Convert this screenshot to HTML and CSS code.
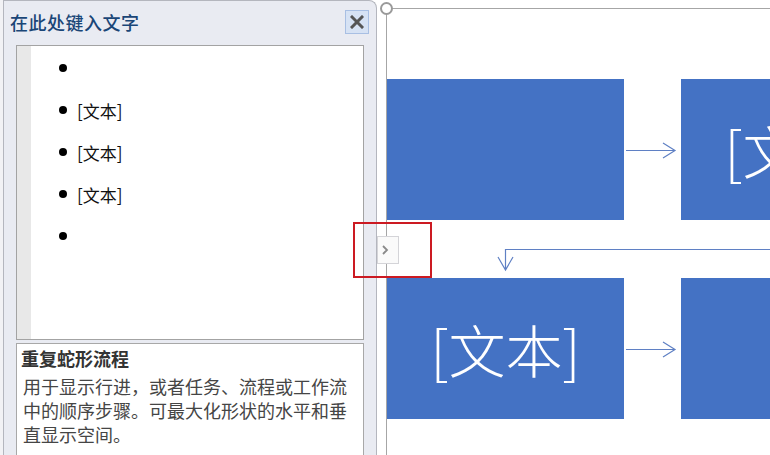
FILE: index.html
```html
<!DOCTYPE html>
<html lang="zh-CN">
<head>
<meta charset="utf-8">
<title>SmartArt 文本窗格</title>
<link rel="stylesheet" href="styles.css">
</head>
<body>
<div class="page">
  <aside class="pane">
    <header class="pane-head">
      <h1 class="pane-title">在此处键入文字</h1>
      <button class="close-btn" aria-label="关闭">
        <svg width="14" height="14" viewBox="0 0 14 14"><path d="M2 2 L12 12 M12 2 L2 12" stroke="#555" stroke-width="3" stroke-linecap="square"/></svg>
      </button>
    </header>
    <div class="text-box">
      <div class="strip"></div>
      <ul class="bullets">
        <li></li>
        <li>[文本]</li>
        <li>[文本]</li>
        <li>[文本]</li>
        <li></li>
      </ul>
    </div>
    <div class="desc">
      <h2 class="desc-title">重复蛇形流程</h2>
      <p class="desc-body">用于显示行进，或者任务、流程或工作流中的顺序步骤。可最大化形状的水平和垂直显示空间。</p>
    </div>
  </aside>

  <main class="canvas">
    <div class="frame">
      <span class="handle"></span>
      <div class="diagram">
        <div class="node"></div>
        <div class="link">
          <svg width="57" height="141" viewBox="0 0 57 141"><path d="M2 71.5 H51 M39 64 L51 71.5 L39 79" class="arrow"/></svg>
        </div>
        <div class="node"><span>[文本]</span></div>
        <div class="turn">
          <svg width="531" height="58" viewBox="0 0 531 58"><path d="M412.5 0 V29.5 H118.5 V50 M111 37 L118.5 50 L126 37" class="arrow"/></svg>
        </div>
        <div class="node"><span>[文本]</span></div>
        <div class="link">
          <svg width="57" height="141" viewBox="0 0 57 141"><path d="M2 71.5 H51 M39 64 L51 71.5 L39 79" class="arrow"/></svg>
        </div>
        <div class="node"></div>
      </div>
    </div>
  </main>
</div>
<div class="highlight"></div>
<div class="toggle-tab">
  <svg width="8" height="12" viewBox="0 0 8 12"><path d="M2 2 L6 6 L2 10" fill="none" stroke="#8a8a8a" stroke-width="1.8"/></svg>
</div>
</body>
</html>
```
FILE: styles.css
```css
* { box-sizing: border-box; }
html, body {
  margin: 0;
  padding: 0;
  width: 770px;
  height: 455px;
  overflow: hidden;
  background: #ffffff;
  font-family: "Noto Sans CJK SC", "Noto Sans", sans-serif;
}
.page {
  display: flex;
  height: 455px;
  background: linear-gradient(to right, #f2f2f5 0, #f2f2f5 3px, transparent 3px);
}
.pane {
  margin-left: 3px;
  width: 374px;
  flex: none;
  height: 470px;
  background: #e9ebf2;
  border: 1px solid #b4b6be;
  border-bottom: none;
  border-top-right-radius: 8px;
  display: flex;
  flex-direction: column;
}
.pane-head {
  height: 44px;
  display: flex;
  align-items: center;
  justify-content: space-between;
  padding: 0 7px 2px 6px;
}
.pane-title {
  margin: 0;
  font-size: 18px;
  font-weight: 500;
  color: #1a4677;
  letter-spacing: 0.5px;
}
.close-btn {
  width: 24px;
  height: 24px;
  padding: 0;
  margin: 0;
  background: #d6e2f4;
  border: 1px solid #a8bfe3;
  display: flex;
  align-items: center;
  justify-content: center;
}
.text-box {
  margin: 0 12px;
  height: 295px;
  background: #ffffff;
  border: 1px solid #a3a3a3;
  display: flex;
}
.strip {
  width: 14px;
  flex: none;
  background: #e8e8e8;
}
.bullets {
  list-style: none;
  margin: 0;
  padding: 1px 0 0 28px;
  display: flex;
  flex-direction: column;
}
.bullets li {
  height: 42px;
  display: flex;
  align-items: center;
  gap: 10px;
  font-size: 17px;
  color: #111;
}
.bullets li::before {
  content: "";
  width: 8px;
  height: 8px;
  border-radius: 50%;
  background: #000;
  flex: none;
}
.desc {
  margin: 3px 12px 0;
  flex: 1;
  background: #ffffff;
  border: 1px solid #a8a8a8;
  border-bottom: none;
  padding: 2px 8px 0 0;
}
.desc-title {
  margin: 0 0 4px;
  padding-left: 4px;
  font-size: 18px;
  line-height: 24px;
  font-weight: bold;
  color: #333333;
}
.desc-body {
  margin: 0;
  padding-left: 6px;
  font-size: 18px;
  line-height: 24px;
  color: #454545;
}
.canvas {
  flex: 1;
  padding: 8px 0 0 9px;
  background: #ffffff;
  overflow: hidden;
}
.frame {
  position: relative;
  height: 100%;
  border-top: 1px solid #a6a6a6;
  border-left: 1px solid #a6a6a6;
  padding-top: 70px;
}
.handle {
  position: absolute;
  left: -7px;
  top: -7px;
  width: 13px;
  height: 13px;
  border-radius: 50%;
  border: 2px solid #9a9a9a;
  background: #ffffff;
}
.diagram {
  display: grid;
  grid-template-columns: 237px 57px 237px;
  grid-template-rows: 141px 58px 141px;
  width: 531px;
}
.node {
  background: #4472c4;
  display: flex;
  align-items: center;
  justify-content: center;
}
.node span {
  color: #ffffff;
  font-size: 57px;
  font-weight: 300;
  line-height: 1;
  white-space: nowrap;
}
.link svg, .turn svg { display: block; overflow: visible; }
.turn { grid-column: 1 / -1; }
.arrow {
  fill: none;
  stroke: #5f80c4;
  stroke-width: 1.2;
}
.highlight {
  position: absolute;
  left: 353px;
  top: 222px;
  width: 79px;
  height: 56px;
  border: 2px solid #cc1a22;
}
.toggle-tab {
  position: absolute;
  left: 377px;
  top: 236px;
  width: 22px;
  height: 28px;
  background: #fafafa;
  border: 1px solid #d4d4d8;
  display: flex;
  align-items: center;
  justify-content: flex-start;
  padding-left: 3px;
}
```
